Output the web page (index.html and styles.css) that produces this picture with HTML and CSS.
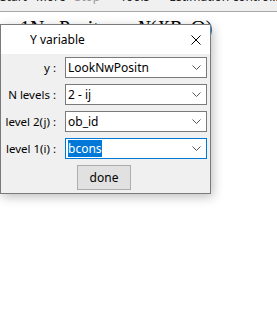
FILE: index.html
```html
<html>
    <head>
        <meta name="viewport" content="width=device-width, initial-scale=1">
        <link rel="stylesheet" href="styles.css">
    </head>

    <body>
        <div class="toolbar">
            <span class="tool">Start</span>
            <span class="tool">More</span>
            <span class="tool off">Stop</span>
            <span class="sep"></span>
            <span class="tool">Tools</span>
            <span class="sep"></span>
            <span class="tool">Estimation control...</span>
            <span class="sep"></span>
        </div>

        <div class="workspace">
            <div class="formula">1NwPositn<sub>ij</sub> ~ <i>N</i>(<i>XB</i>, Ω)</div>
        </div>

        <div class="dialog">
            <div class="titlebar">
                <span class="title">Y variable</span>
                <svg class="close" width="10" height="10" viewBox="0 0 10 10">
                    <path d="M0.5 0.5 L9.5 9.5 M9.5 0.5 L0.5 9.5" stroke="#000" stroke-width="1" fill="none"/>
                </svg>
            </div>

            <div class="body">
                <div class="row">
                    <label>y :</label>
                    <div class="combo"><span>LookNwPositn</span>
                        <svg width="9" height="5" viewBox="0 0 9 5"><polyline points="0.5,0.5 4.5,4.5 8.5,0.5" stroke="#555" fill="none"/></svg>
                    </div>
                </div>
                <div class="row">
                    <label>N levels :</label>
                    <div class="combo"><span>2 - ij</span>
                        <svg width="9" height="5" viewBox="0 0 9 5"><polyline points="0.5,0.5 4.5,4.5 8.5,0.5" stroke="#555" fill="none"/></svg>
                    </div>
                </div>
                <div class="row">
                    <label>level 2(j) :</label>
                    <div class="combo"><span>ob_id</span>
                        <svg width="9" height="5" viewBox="0 0 9 5"><polyline points="0.5,0.5 4.5,4.5 8.5,0.5" stroke="#555" fill="none"/></svg>
                    </div>
                </div>
                <div class="row">
                    <label>level 1(i) :</label>
                    <div class="combo focus"><span class="picked">bcons</span>
                        <svg width="9" height="5" viewBox="0 0 9 5"><polyline points="0.5,0.5 4.5,4.5 8.5,0.5" stroke="#555" fill="none"/></svg>
                    </div>
                </div>
                <div class="actions">
                    <button class="btn">done</button>
                </div>
            </div>
        </div>
    </body>
</html>
```

FILE: styles.css
```css
* {
  box-sizing: border-box;
}

body {
  margin: 0;
  background: #fff;
  font-family: "Noto Sans", "Open Sans", sans-serif;
  font-size: 12px;
  color: #000;
  overflow: hidden;
}

.toolbar {
  height: 12px;
  display: flex;
  gap: 9px;
  background: #f0f0f0;
  border-bottom: 1px solid #a8a8a8;
  overflow: hidden;
}

.tool {
  line-height: 12px;
  margin-top: -9px;
  color: #222;
  white-space: nowrap;
}

.tool.off {
  color: #9a9a9a;
}

.sep {
  width: 1px;
  background: #c8c8c8;
  margin: 0 1px;
}

.workspace {
  height: 302px;
  padding: 6px 0 0 20px;
}

.formula {
  font-family: "Liberation Serif", serif;
  font-size: 20px;
  line-height: 20px;
  white-space: nowrap;
}

.formula sub {
  font-size: 12px;
}

/* dialog window floats over the workspace */
.dialog {
  position: absolute;
  left: 0;
  top: 24px;
  width: 211px;
  height: 170px;
  border: 1px solid #7a7a7a;
  background: #f0f0f0;
  box-shadow: 2px 3px 10px rgba(0, 0, 0, 0.25);
  display: flex;
  flex-direction: column;
}

.titlebar {
  height: 30px;
  background: #fff;
  display: flex;
  align-items: center;
  justify-content: space-between;
  padding: 0 9px 0 29px;
}

.body {
  flex: 1;
  padding: 3px 2px 3px 0;
  display: flex;
  flex-direction: column;
  gap: 6px;
}

.row {
  display: grid;
  grid-template-columns: 57px 142px;
  column-gap: 7px;
  align-items: center;
}

.row label {
  text-align: right;
  white-space: nowrap;
  font-size: 11.5px;
  padding-right: 2px;
}

.combo {
  height: 21px;
  background: #fff;
  border: 1px solid #7a7a7a;
  display: flex;
  align-items: center;
  justify-content: space-between;
  padding: 0 5px 0 2px;
  white-space: nowrap;
}

.combo.focus {
  border-color: #0078d7;
}

.picked {
  background: #0078d7;
  color: #fff;
}

.actions {
  display: flex;
  padding-left: 76px;
}

.btn {
  width: 54px;
  height: 25px;
  background: #e1e1e1;
  border: 1px solid #adadad;
  font-family: "Noto Sans", "Open Sans", sans-serif;
  font-size: 12px;
  color: #000;
  padding: 0;
}
```
